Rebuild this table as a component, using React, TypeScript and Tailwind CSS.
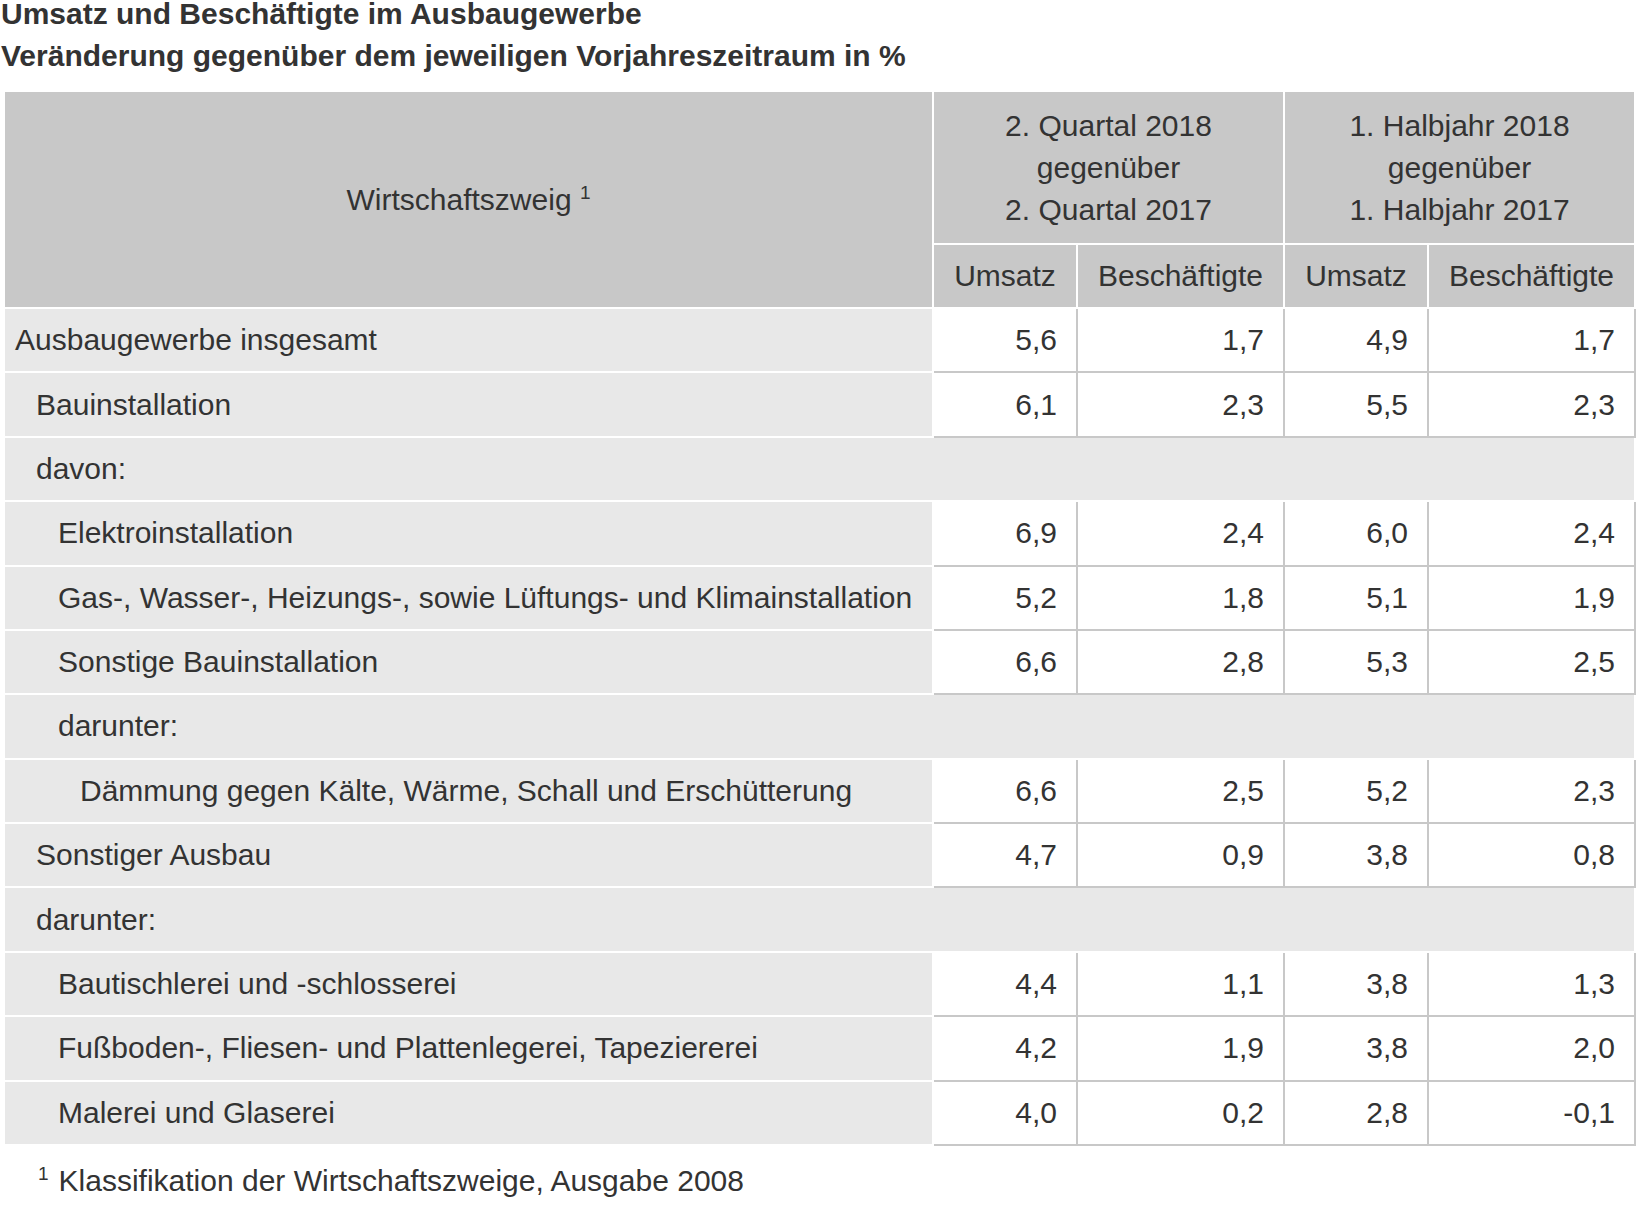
import React from 'react'

type Row = {
  label: string
  level: number
  values?: [string, string, string, string]
}

const ROWS: Row[] = [
  { label: 'Ausbaugewerbe insgesamt', level: 0, values: ['5,6', '1,7', '4,9', '1,7'] },
  { label: 'Bauinstallation', level: 1, values: ['6,1', '2,3', '5,5', '2,3'] },
  { label: 'davon:', level: 1 },
  { label: 'Elektroinstallation', level: 2, values: ['6,9', '2,4', '6,0', '2,4'] },
  { label: 'Gas-, Wasser-, Heizungs-, sowie Lüftungs- und Klimainstallation', level: 2, values: ['5,2', '1,8', '5,1', '1,9'] },
  { label: 'Sonstige Bauinstallation', level: 2, values: ['6,6', '2,8', '5,3', '2,5'] },
  { label: 'darunter:', level: 2 },
  { label: 'Dämmung gegen Kälte, Wärme, Schall und Erschütterung', level: 3, values: ['6,6', '2,5', '5,2', '2,3'] },
  { label: 'Sonstiger Ausbau', level: 1, values: ['4,7', '0,9', '3,8', '0,8'] },
  { label: 'darunter:', level: 1 },
  { label: 'Bautischlerei und -schlosserei', level: 2, values: ['4,4', '1,1', '3,8', '1,3'] },
  { label: 'Fußboden-, Fliesen- und Plattenlegerei, Tapeziererei', level: 2, values: ['4,2', '1,9', '3,8', '2,0'] },
  { label: 'Malerei und Glaserei', level: 2, values: ['4,0', '0,2', '2,8', '-0,1'] },
]

const INDENT = ['pl-[10px]', 'pl-[31px]', 'pl-[53px]', 'pl-[75px]']

const th = 'bg-[#c8c8c8] border-2 border-white font-normal text-center align-middle'
const label = 'bg-[#e8e8e8] border-2 border-white text-left py-[10.2px] whitespace-nowrap'
const num = 'bg-white border-2 border-[#c8c8c8] text-right pr-[19px] py-[10.2px]'

export default function App() {
  return (
    <div className="min-h-screen bg-white text-[#333] text-[30px] leading-[42px] font-['Liberation_Sans',Arial,sans-serif]">
      <div className="mt-[-7px] pl-[1px] font-bold leading-[42px]">
        <div>Umsatz und Beschäftigte im Ausbaugewerbe</div>
        <div>Veränderung gegenüber dem jeweiligen Vorjahreszeitraum in %</div>
      </div>

      <table className="mt-[13px] ml-[3px] w-[1631px] table-fixed border-collapse">
        <colgroup>
          <col className="w-[929px]" />
          <col className="w-[144px]" />
          <col className="w-[207px]" />
          <col className="w-[144px]" />
          <col className="w-[207px]" />
        </colgroup>
        <thead>
          <tr>
            <th rowSpan={2} className={th}>
              Wirtschaftszweig <sup className="text-[19px] relative top-[-11px]">1</sup>
            </th>
            <th colSpan={2} className={`${th} pt-[13px] pb-[12px]`}>
              2. Quartal 2018<br />gegenüber<br />2. Quartal 2017
            </th>
            <th colSpan={2} className={`${th} pt-[13px] pb-[12px]`}>
              1. Halbjahr 2018<br />gegenüber<br />1. Halbjahr 2017
            </th>
          </tr>
          <tr>
            <th className={`${th} py-[10px]`}>Umsatz</th>
            <th className={`${th} py-[10px]`}>Beschäftigte</th>
            <th className={`${th} py-[10px]`}>Umsatz</th>
            <th className={`${th} py-[10px]`}>Beschäftigte</th>
          </tr>
        </thead>
        <tbody>
          {ROWS.map((r, i) =>
            r.values ? (
              <tr key={i}>
                <td className={`${label} ${INDENT[r.level]}`}>{r.label}</td>
                {r.values.map((v, j) => (
                  <td key={j} className={num}>{v}</td>
                ))}
              </tr>
            ) : (
              <tr key={i}>
                <td colSpan={5} className={`${label} ${INDENT[r.level]}`}>{r.label}</td>
              </tr>
            )
          )}
        </tbody>
      </table>

      <p className="mt-[14px] pl-[38px]">
        <sup className="text-[19px] relative top-[-11px]">1</sup>
        <span className="ml-[10px]">Klassifikation der Wirtschaftszweige, Ausgabe 2008</span>
      </p>
    </div>
  )
}
